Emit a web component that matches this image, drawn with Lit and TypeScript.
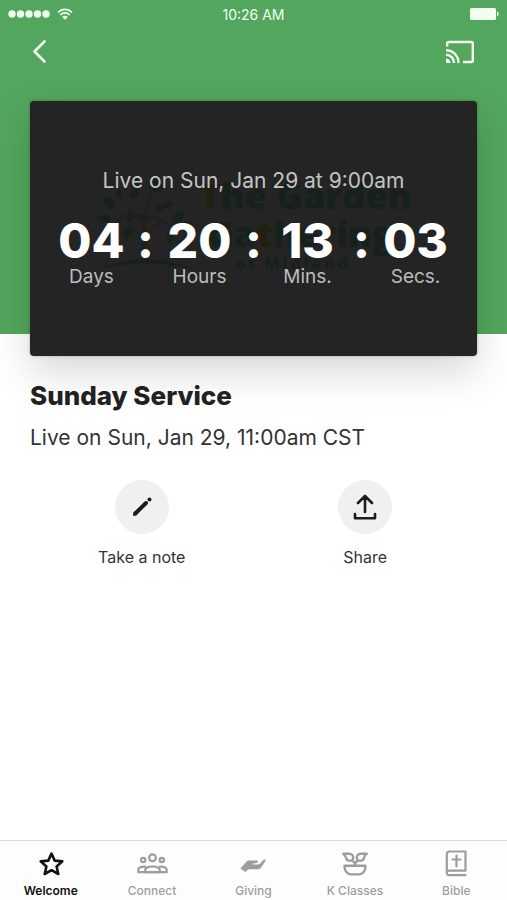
import { LitElement, html, css, svg } from "lit";
import { customElement, property } from "lit/decorators.js";

const starIcon = svg`<svg viewBox="0 0 32 28" width="32" height="28" fill="none" stroke="currentColor" stroke-width="2.6" stroke-linejoin="round">
  <path d="M16.500 3.600l3.200 7 7.600 .8-5.700 5.100 1.700 7.500L16.500 20.200 9.700 24l1.700-7.500-5.700-5.100 7.600-.8z"/></svg>`;

const peopleIcon = svg`<svg viewBox="0 0 32 28" width="32" height="28" fill="none" stroke="currentColor" stroke-width="2.200" stroke-linejoin="round">
  <circle cx="16.500" cy="7.700" r="3.400"/><circle cx="7.200" cy="10" r="2.200"/><circle cx="25.800" cy="10" r="2.200"/>
  <path d="M9.200 22.200v-1.700c0-2.500 2.800-4 7.300-4s7.300 1.500 7.300 4v1.700z"/>
  <path d="M10 16.800C5 16.200 2.300 17.700 2.300 20v2.200h28.400V20c0-2.300-2.700-3.800-7.700-3.200"/></svg>`;

const handIcon = svg`<svg viewBox="0 0 32 28" width="32" height="28" fill="currentColor">
  <path d="M3.300 18.600L9.500 11.800c1-1 2-1.200 3.300-1.200h6.800c1.600 0 1.700 2.300 0 2.500l-4 .5v.8h5.600c1 0 1.700-.4 2.300-1.100l2.700-3.200c.9-1 3-.6 2.300 1l-4.200 6.200c-.9 1.300-1.900 1.900-3.500 1.900h-8.200c-1.200 0-2 .5-3 1.500l-1.200 1.200z"/></svg>`;

const plantIcon = svg`<svg viewBox="0 0 32 28" width="32" height="28" fill="none" stroke="currentColor" stroke-width="2.400" stroke-linejoin="round">
  <path d="M5.500 15.800h21c0 5-2.600 8.600-7 8.600h-7c-4.400 0-7-3.600-7-8.600z"/>
  <path d="M16 15.500v-2.500M16 13.500l-2.500-3M16 13.500l2.500-3"/>
  <path d="M4.200 3.800h6c2.700 0 4.200 2 4 4.200-.2 1.800-1.500 2.900-3.300 2.900-2.600 0-3.600-1.300-4-3.300-.3-1.700-1-2.800-2.700-3.800z"/>
  <path d="M27.800 3.800h-6c-2.700 0-4.200 2-4 4.200.2 1.800 1.500 2.900 3.300 2.900 2.600 0 3.600-1.300 4-3.300.3-1.700 1-2.800 2.700-3.800z"/></svg>`;

const bookIcon = svg`<svg viewBox="0 0 32 28" width="32" height="28" fill="none" stroke="currentColor" stroke-width="2.200" stroke-linejoin="round" stroke-linecap="round">
  <path d="M25.500 25.200H9.200C7.400 25.200 6.800 24.200 6.800 22.700V4.300C6.800 2.500 7.500 1.500 9.500 1.500h16v19.200H9.200C7.700 20.700 6.800 21.300 6.800 22.700"/>
  <path d="M16.500 5.500v10.800M12.500 9.500h8"/></svg>`;

const leaf = "M0 0C-5 -3 -5 -9 0 -14C5 -9 5 -3 0 0Z";
const leaves = [
  [44, 24, -20, 1], [56, 24, 20, 1], [68, 26, -60, 1.3], [36, 34, 35, 1], [26, 34, -20, 0.8],
  [20, 44, -45, 1.2], [16, 54, -85, 1], [34, 58, 10, 1], [30, 74, 20, 1.1], [62, 48, 30, 0.8],
  [68, 42, 60, 0.8], [78, 58, 40, 1.2], [84, 62, 75, 1.1], [74, 78, 10, 1], [84, 80, 50, 0.9],
];

@customElement("church-logo")
export class ChurchLogo extends LitElement {
  static styles = css`
    :host {
      display: flex;
      align-items: flex-start;
      gap: 4px;
      font-family: "Open Sans", "Noto Sans", sans-serif;
      color: #15211a;
    }
    .name {
      font-size: 36px;
      line-height: 38px;
      font-weight: 800;
      padding-top: 12px;
      white-space: nowrap;
    }
    .second {
      padding-left: 8px;
    }
    .gold {
      color: #1f2010;
    }
    .place {
      font-size: 16px;
      line-height: 20px;
      font-weight: 700;
      letter-spacing: 3px;
      padding-left: 36px;
    }
  `;

  render() {
    return html`
      <svg viewBox="0 0 100 108" width="100" height="108" aria-hidden="true">
        <g fill="#17211a">
          ${leaves.map(
            ([x, y, r, s]) => svg`<path d=${leaf} transform=${`translate(${x} ${y}) rotate(${r}) scale(${s})`} />`
          )}
          <path d="M6 104Q50 84 98 104Q50 93 6 104Z" />
        </g>
        <g fill="none" stroke="#201f1c" stroke-width="2" stroke-linecap="round">
          <path d="M49 94V52" stroke-width="6" />
          <path d="M49 56C42 46 28 48 20 60" stroke-width="4" />
          <path d="M50 54C60 48 70 56 82 68M50 52L56 26M50 70L68 54M48 72L34 60" />
        </g>
      </svg>
      <div class="name">
        <div><span class="gold">T</span>he Garden</div>
        <div class="second">Ga<span class="gold">t</span>hering</div>
        <div class="place">of Midland</div>
      </div>
    `;
  }
}

@customElement("live-countdown")
export class LiveCountdown extends LitElement {
  @property() heading = "";
  @property({ attribute: false }) parts: [string, string][] = [];

  static styles = css`
    :host {
      position: relative;
      display: flex;
      flex-direction: column;
      align-items: center;
      justify-content: center;
      aspect-ratio: 448 / 256;
      box-sizing: border-box;
      padding-bottom: 2px;
      border-radius: 4px;
      background: #242424;
      box-shadow: 0 16px 40px rgba(0, 0, 0, 0.16), 0 0 3px rgba(0, 0, 0, 0.25);
    }
    church-logo {
      position: absolute;
      inset: 64px 0 0;
      justify-content: center;
    }
    .heading {
      position: relative;
      margin: 0;
      font-size: 21px;
      line-height: 28px;
      font-weight: 400;
      color: #c4c4c4;
    }
    .timer {
      position: relative;
      display: flex;
      justify-content: center;
      margin-top: 20px;
    }
    .part {
      display: flex;
      flex-direction: column;
      align-items: center;
      width: 84px;
    }
    .value,
    .colon {
      font-size: 48px;
      line-height: 52px;
      font-weight: 800;
      color: #fff;
    }
    .colon {
      width: 24px;
      text-align: center;
    }
    .label {
      font-size: 19px;
      line-height: 24px;
      color: #bcbcbc;
      margin-top: -2px;
    }
  `;

  render() {
    return html`
      <church-logo></church-logo>
      <p class="heading">${this.heading}</p>
      <div class="timer" role="timer">
        ${this.parts.map(
          ([value, label], i) => html`
            ${i ? html`<span class="colon">:</span>` : ""}
            <div class="part"><span class="value">${value}</span><span class="label">${label}</span></div>
          `
        )}
      </div>
    `;
  }
}

@customElement("app-root")
export class AppRoot extends LitElement {
  static styles = css`
    :host {
      display: flex;
      flex-direction: column;
      min-height: 100vh;
      background: #fff;
      color: #222;
      font-family: Inter, "Liberation Sans", sans-serif;
    }
    button {
      border: 0;
      padding: 0;
      background: none;
      font: inherit;
      color: inherit;
      cursor: pointer;
    }
    svg {
      display: block;
    }
    .hero {
      padding: 0 30px;
      background: linear-gradient(#53a65d, #53a65d) top / 100% 334px no-repeat;
    }
    .status {
      display: grid;
      grid-template-columns: 1fr auto 1fr;
      align-items: center;
      height: 28px;
      margin: 0 -22px;
      color: #f2fff0;
      font-size: 14px;
      font-weight: 400;
    }
    .signal {
      display: flex;
      align-items: center;
      gap: 7px;
    }
    .battery {
      justify-self: end;
    }
    .nav {
      display: flex;
      justify-content: space-between;
      align-items: center;
      height: 48px;
      margin-bottom: 25px;
      color: #f2fff0;
    }
    .details {
      padding: 24px 30px 0;
    }
    h1 {
      margin: 0;
      font-size: 26px;
      line-height: 32px;
      font-weight: 800;
    }
    .time {
      margin: 12px 0 0;
      font-size: 21px;
      line-height: 28px;
      color: #333;
    }
    .actions {
      display: grid;
      grid-template-columns: 1fr 1fr;
      margin-top: 28px;
    }
    .action {
      display: flex;
      flex-direction: column;
      align-items: center;
      justify-self: center;
      gap: 11px;
      font-size: 16px;
      line-height: 24px;
      color: #333;
    }
    .disc {
      display: grid;
      place-items: center;
      width: 54px;
      height: 54px;
      border-radius: 50%;
      background: #eef0f1;
      color: #1c1c1e;
    }
    .tabs {
      display: grid;
      grid-template-columns: repeat(5, 1fr);
      margin-top: auto;
      height: 59px;
      border-top: 1px solid #dcdcdc;
      background: #fdfdfd;
    }
    .tab {
      display: flex;
      flex-direction: column;
      align-items: center;
      padding-top: 9px;
      gap: 5px;
      font-size: 12px;
      line-height: 16px;
      font-weight: 500;
      color: #9d9d9d;
      text-decoration: none;
    }
    .tab.active {
      color: #111;
      font-weight: 600;
    }
  `;

  private parts: [string, string][] = [
    ["04", "Days"],
    ["20", "Hours"],
    ["13", "Mins."],
    ["03", "Secs."],
  ];

  private tabs = [
    { label: "Welcome", icon: starIcon },
    { label: "Connect", icon: peopleIcon },
    { label: "Giving", icon: handIcon },
    { label: "K Classes", icon: plantIcon },
    { label: "Bible", icon: bookIcon },
  ];

  render() {
    return html`
      <header class="hero">
        <div class="status">
          <div class="signal">
            <svg width="42" height="8" viewBox="0 0 42 8" fill="currentColor">
              ${[4, 12.5, 21, 29.5, 38].map((x) => svg`<circle cx=${x} cy="4" r="3.700" />`)}
            </svg>
            <svg width="16" height="12" viewBox="0 0 16 12" fill="none" stroke="currentColor" stroke-width="1.700">
              <path d="M1 4.500C5 .3 11 .3 15 4.500M3.300 7C6 4.200 10 4.200 12.700 7" />
              <path d="M5.200 9Q8 6.500 10.800 9L8 11.800z" fill="currentColor" stroke="none" />
            </svg>
          </div>
          <span>10:26 AM</span>
          <svg class="battery" width="29" height="12" viewBox="0 0 29 12" fill="currentColor">
            <rect width="26" height="12" rx="1.500" />
            <path d="M27 3.500c2.200 0 2.200 5 0 5z" />
          </svg>
        </div>
        <nav class="nav">
          <button aria-label="Back">
            <svg width="20" height="28" viewBox="0 0 20 28" fill="none" stroke="currentColor" stroke-width="2.600" stroke-linecap="round" stroke-linejoin="round">
              <path d="M14.500 3.500L4.500 13.500l10 10" />
            </svg>
          </button>
          <button aria-label="Cast">
            <svg width="34" height="28" viewBox="0 0 34 28" fill="none" stroke="currentColor" stroke-width="2.400">
              <path d="M4.200 8.500V5.500q0-1.500 1.500-1.500h22.600q1.500 0 1.500 1.500v17q0 1.500-1.500 1.500H20" />
              <path d="M3 12.200A12.500 12.500 0 0 1 15.500 25M3 16.700A8 8 0 0 1 11 25" />
              <path d="M3 20.500A4.500 4.500 0 0 1 7.500 25H3z" fill="currentColor" stroke="none" />
            </svg>
          </button>
        </nav>
        <live-countdown heading="Live on Sun, Jan 29 at 9:00am" .parts=${this.parts}></live-countdown>
      </header>
      <main class="details">
        <h1>Sunday Service</h1>
        <p class="time">Live on Sun, Jan 29, 11:00am CST</p>
        <div class="actions">
          <button class="action">
            <span class="disc">
              <svg width="28" height="28" viewBox="0 0 28 28" fill="none" stroke="currentColor" stroke-width="4" stroke-linecap="round">
                <path d="M7.300 20.500L18 10" />
                <path d="M5 23l1-4.500 3.500 3.500z" fill="currentColor" stroke="none" />
                <circle cx="21.500" cy="6.500" r="2" fill="currentColor" stroke="none" />
              </svg>
            </span>
            Take a note
          </button>
          <button class="action">
            <span class="disc">
              <svg width="28" height="28" viewBox="0 0 28 28" fill="none" stroke="currentColor" stroke-width="2.600" stroke-linecap="round" stroke-linejoin="round">
                <path d="M14 19V3.500M7 10l7-7 7 7M4 21v4.200h20V21" />
              </svg>
            </span>
            Share
          </button>
        </div>
      </main>
      <nav class="tabs">
        ${this.tabs.map(
          (tab, i) => html`<a class="tab ${i === 0 ? "active" : ""}" href="#">${tab.icon}<span>${tab.label}</span></a>`
        )}
      </nav>
    `;
  }
}
